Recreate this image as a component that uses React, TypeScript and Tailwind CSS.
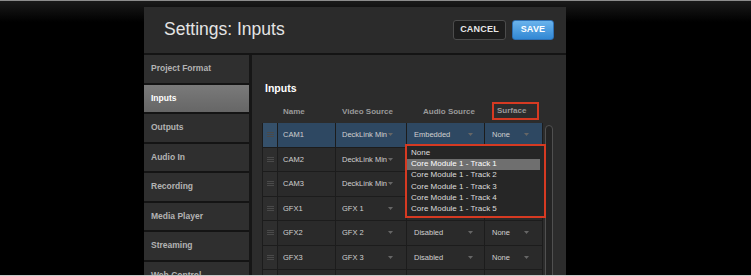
import React from "react";

const sideItems = [
  "Project Format",
  "Inputs",
  "Outputs",
  "Audio In",
  "Recording",
  "Media Player",
  "Streaming",
  "Web Control",
];

type Row = { name: string; video: string; audio: string; surface: string; selected?: boolean };

const rows: Row[] = [
  { name: "CAM1", video: "DeckLink Min", audio: "Embedded", surface: "None", selected: true },
  { name: "CAM2", video: "DeckLink Min", audio: "", surface: "" },
  { name: "CAM3", video: "DeckLink Min", audio: "", surface: "" },
  { name: "GFX1", video: "GFX 1", audio: "", surface: "" },
  { name: "GFX2", video: "GFX 2", audio: "Disabled", surface: "None" },
  { name: "GFX3", video: "GFX 3", audio: "Disabled", surface: "None" },
  { name: "", video: "", audio: "", surface: "" },
];

const menuItems = [
  "None",
  "Core Module 1 - Track 1",
  "Core Module 1 - Track 2",
  "Core Module 1 - Track 3",
  "Core Module 1 - Track 4",
  "Core Module 1 - Track 5",
];

function Caret({ show }: { show: boolean }) {
  if (!show) return null;
  return (
    <svg width="5" height="3" viewBox="0 0 5 3" className="shrink-0">
      <path d="M0 0 L5 0 L2.5 3 Z" fill="#666666" />
    </svg>
  );
}

function Handle() {
  return (
    <svg width="7" height="5" viewBox="0 0 7 5">
      <rect x="0" y="0" width="7" height="1" fill="#4a4a4a" />
      <rect x="0" y="2" width="7" height="1" fill="#4a4a4a" />
      <rect x="0" y="4" width="7" height="1" fill="#4a4a4a" />
    </svg>
  );
}

export default function App() {
  return (
    <div className="w-[751px] h-[276px] flex flex-col overflow-hidden bg-[linear-gradient(to_bottom,#1b1b1b_0px,#000_22px)] font-['Liberation_Sans',Arial,sans-serif]">
      <div className="h-[1px] bg-[#8c8c8c] shrink-0" />
      <div className="flex-1 overflow-hidden">
        <div className="ml-[144px] mt-[6px] w-[422px] bg-[#141414] flex flex-col">
          {/* Header */}
          <div className="h-[46px] shrink-0 bg-[#2b2b2b] flex items-center pl-[20px] pr-[12px]">
            <div className="text-[17.5px] text-[#e4e4e4] leading-none flex-1 -mt-[1px]">Settings: Inputs</div>
            <div className="w-[53px] h-[20px] rounded-[3px] border border-[#4c4c4c] bg-[#1d1d1d] flex items-center justify-center text-[9px] font-bold text-[#e8e8e8] tracking-[0.2px]">
              CANCEL
            </div>
            <div className="ml-[6px] w-[42px] h-[20px] rounded-[3px] border border-[#2d6fb3] bg-[linear-gradient(to_bottom,#6ab3ec,#3288d4)] flex items-center justify-center text-[9px] font-bold text-white tracking-[0.2px]">
              SAVE
            </div>
          </div>
          {/* Body */}
          <div className="mt-[2px] flex h-[240px] shrink-0">
            <div className="w-[105px] flex flex-col gap-[2px]">
              {sideItems.map((s) => {
                const active = s === "Inputs";
                return (
                  <div
                    key={s}
                    className={
                      active
                        ? "h-[27.5px] shrink-0 flex items-center pl-[7px] bg-[linear-gradient(to_bottom,#7a7a7a,#666666)] text-white text-[8.5px] font-bold"
                        : "h-[27.5px] shrink-0 flex items-center pl-[7px] bg-[#2f2f2f] text-[#b3b3b3] text-[8.5px] font-bold"
                    }
                  >
                    {s}
                  </div>
                );
              })}
            </div>
            <div className="w-[3px] bg-[#161616]" />
            <div className="flex-1 bg-[#2c2c2c] flex flex-col pt-[27px] overflow-hidden">
              <div className="shrink-0 pl-[13px] text-[10.5px] leading-[12px] font-bold text-white">Inputs</div>
              {/* header row */}
              <div className="shrink-0 mt-[8px] ml-[10px] h-[21px] flex text-[8px] font-bold text-[#9a9a9a]">
                <div className="w-[16px]" />
                <div className="w-[58px] pl-[5px] flex items-center -mt-[1px]">Name</div>
                <div className="w-[71px] pl-[6px] flex items-center -mt-[1px]">Video Source</div>
                <div className="w-[78px] pl-[16px] flex items-center -mt-[1px]">Audio Source</div>
                <div className="w-[58px] pl-[7px]">
                  <div className="w-[47px] h-[18px] border-2 border-[#d63a22] flex items-center pl-[3px]">Surface</div>
                </div>
              </div>
              {/* table + scrollbar */}
              <div className="shrink-0 ml-[10px] flex">
                <div className="relative w-[281px] flex flex-col border-l border-[#1c1c1c]">
                  {rows.map((r, i) => (
                    <div
                      key={i}
                      className={
                        (r.selected ? "bg-[#2e4862] " : "bg-[#2a2a2a] ") +
                        "h-[24.5px] shrink-0 flex border-b border-[#1c1c1c] text-[7.5px] text-[#d0d0d0]"
                      }
                    >
                      <div
                        className={
                          (r.selected ? "bg-[#35506a] " : "bg-[#2e2e2e] ") +
                          "w-[15px] border-r border-[#1c1c1c] flex items-center justify-center"
                        }
                      >
                        {r.name && <Handle />}
                      </div>
                      <div className="w-[58px] border-r border-[#1c1c1c] flex items-center pl-[5px]">{r.name}</div>
                      <div className="w-[71px] border-r border-[#1c1c1c] flex items-center pl-[6px] pr-[13px]">
                        <span className="flex-1">{r.video}</span>
                        <Caret show={!!r.video} />
                      </div>
                      <div className="w-[78px] border-r border-[#1c1c1c] flex items-center pl-[7px] pr-[11px]">
                        <span className="flex-1">{r.audio}</span>
                        <Caret show={!!r.audio} />
                      </div>
                      <div className="w-[58px] border-r border-[#1c1c1c] flex items-center pl-[7px] pr-[13px]">
                        <span className="flex-1">{r.surface}</span>
                        <Caret show={!!r.surface} />
                      </div>
                    </div>
                  ))}
                  {/* dropdown menu overlay */}
                  <div className="absolute left-[142px] top-[21px] w-[141px] h-[74px] border-2 border-[#d63a22] bg-[#262626] pt-[1.5px]">
                    <div className="mr-[4px] flex flex-col">
                      {menuItems.map((m, i) => (
                        <div
                          key={m}
                          className={
                            (i === 1 ? "bg-[#6f6f6f] text-white " : "text-[#dcdcdc] ") +
                            "h-[11.2px] flex items-center pl-[4px] text-[8px] leading-none"
                          }
                        >
                          {m}
                        </div>
                      ))}
                    </div>
                  </div>
                </div>
                <div className="ml-[2px] w-[8px] flex flex-col pt-[2px]">
                  <div className="h-[160px] rounded-t-[4px] border border-[#505050] bg-[#242424]" />
                </div>
              </div>
            </div>
          </div>
        </div>
      </div>
      <div className="h-[1px] bg-[#c8c8c8] shrink-0" />
    </div>
  );
}
